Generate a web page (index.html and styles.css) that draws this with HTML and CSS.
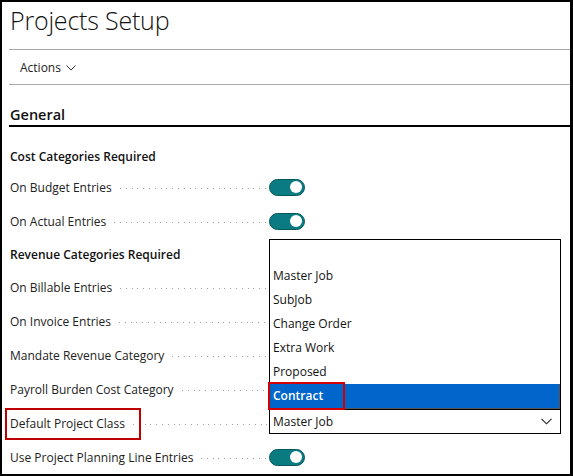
FILE: index.html
```html
<!DOCTYPE html>
<html lang="en">
<head>
<meta charset="utf-8">
<title>Projects Setup</title>
<link rel="stylesheet" href="styles.css">
</head>
<body>
<div class="frame">
  <div class="page">
    <h1 class="title">Projects Setup</h1>
    <div class="actions">
      <span class="actions-label">Actions</span>
      <svg class="chev-small" width="10" height="6" viewBox="0 0 10 6"><path d="M0.5 0.5 L5 5 L9.5 0.5" fill="none" stroke="#333" stroke-width="1"/></svg>
    </div>
    <div class="section-head">General</div>
    <div class="fields">
      <div class="group first">Cost Categories Required</div>
      <div class="row">
        <div class="label"><span class="text">On Budget Entries</span><span class="dots"></span></div>
        <div class="value"><span class="toggle"><span class="knob"></span></span></div>
      </div>
      <div class="row">
        <div class="label"><span class="text">On Actual Entries</span><span class="dots"></span></div>
        <div class="value"><span class="toggle"><span class="knob"></span></span></div>
      </div>
      <div class="group">Revenue Categories Required</div>
      <div class="row">
        <div class="label"><span class="text">On Billable Entries</span><span class="dots"></span></div>
        <div class="value"></div>
      </div>
      <div class="row">
        <div class="label"><span class="text">On Invoice Entries</span><span class="dots"></span></div>
        <div class="value"></div>
      </div>
      <div class="row">
        <div class="label"><span class="text">Mandate Revenue Category</span><span class="dots"></span></div>
        <div class="value"></div>
      </div>
      <div class="row">
        <div class="label"><span class="text">Payroll Burden Cost Category</span><span class="dots"></span></div>
        <div class="value"></div>
      </div>
      <div class="row">
        <div class="label"><span class="text marked">Default Project Class<span class="callout-label"></span></span><span class="dots"></span></div>
        <div class="value">
          <div class="combo">
            <ul class="popup">
              <li class="opt"></li>
              <li class="opt">Master Job</li>
              <li class="opt">SubJob</li>
              <li class="opt">Change Order</li>
              <li class="opt">Extra Work</li>
              <li class="opt">Proposed</li>
              <li class="opt selected">Contract<span class="callout-opt"></span></li>
            </ul>
            <div class="select">
              <span>Master Job</span>
              <svg class="chev" width="11" height="7" viewBox="0 0 11 7"><path d="M0.5 0.8 L5.5 5.8 L10.5 0.8" fill="none" stroke="#222" stroke-width="1.1"/></svg>
            </div>
          </div>
        </div>
      </div>
      <div class="row">
        <div class="label"><span class="text">Use Project Planning Line Entries</span><span class="dots"></span></div>
        <div class="value"><span class="toggle"><span class="knob"></span></span></div>
      </div>
    </div>
  </div>
</div>
</body>
</html>
```
FILE: styles.css
```css
* { box-sizing: border-box; }
html, body { margin: 0; padding: 0; background: #fff; }
body {
  width: 573px;
  height: 476px;
  font-family: "Segoe UI", "Open Sans", "Noto Sans", sans-serif;
  color: #1a1a1a;
  font-size: 12px;
}
.frame {
  width: 573px;
  height: 476px;
  border: 2px solid #000;
  border-right-width: 3px;
  position: relative;
  overflow: hidden;
}
.page { padding-left: 7px; }
.title {
  margin: 0;
  height: 48px;
  padding-left: 1px;
  padding-top: 3px;
  font-size: 25px;
  line-height: 30px;
  font-weight: 300;
  color: #111;
  border-bottom: 1px solid #a8a8a8;
  letter-spacing: -0.2px;
}
.actions {
  height: 35px;
  border-bottom: 1px solid #a8a8a8;
  display: flex;
  align-items: center;
  padding-left: 11px;
  gap: 5px;
  font-size: 12px;
  color: #222;
}
.chev-small { margin-top: 1px; }
.section-head {
  height: 42px;
  padding-top: 20px;
  padding-left: 1px;
  font-size: 14.5px;
  line-height: 20px;
  font-weight: 600;
  color: #111;
  border-bottom: 2px solid #000;
}
.fields { padding-top: 11px; padding-left: 1px; }
.group {
  height: 32px;
  padding-top: 7px;
  line-height: 20px;
  font-weight: 600;
  font-size: 12px;
  color: #111;
}
.group.first { padding-top: 9px; }
.row {
  height: 34px;
  display: grid;
  grid-template-columns: 259px 1fr;
  align-items: center;
}
.label {
  display: flex;
  align-items: center;
  gap: 8px;
  padding-right: 1px;
}
.text { white-space: nowrap; color: #222; position: relative; }
.dots {
  flex: 1;
  height: 1px;
  margin-top: 2px;
  background: repeating-linear-gradient(to right, #a0a0a0 0 1px, transparent 1px 5.8px);
}
.value { position: relative; height: 100%; display: flex; align-items: center; }
.toggle {
  width: 36px;
  height: 17px;
  border-radius: 9px;
  background: #0a7b81;
  border: 1px solid #05585d;
  position: relative;
  display: block;
}
.knob {
  position: absolute;
  right: 2px;
  top: 1.5px;
  width: 12px;
  height: 12px;
  border-radius: 50%;
  background: #fff;
}
.callout-label {
  position: absolute;
  left: -5px;
  top: -7px;
  width: 136px;
  height: 32px;
  border: 2px solid #c00000;
}
.combo {
  position: relative;
  width: 292px;
  margin-bottom: 3px;
}
.select {
  height: 25px;
  border: 1px solid #000;
  display: flex;
  align-items: center;
  justify-content: space-between;
  padding: 0 8px 0 3px;
  font-size: 12px;
  color: #111;
}
.popup {
  list-style: none;
  margin: 0;
  padding: 0;
  position: absolute;
  left: 0;
  bottom: 100%;
  width: 292px;
  border: 1px solid #000;
  border-bottom: none;
  background: #fff;
}
.opt {
  height: 24px;
  line-height: 24px;
  padding-left: 3px;
  font-size: 12px;
  color: #111;
  position: relative;
}
.opt.selected {
  background: #0066cc;
  color: #fff;
  font-weight: 600;
  border-bottom: 1px solid #555;
  border-right: 1px solid #555;
  height: 25px;
}
.callout-opt {
  position: absolute;
  left: -2px;
  top: -2px;
  width: 77px;
  height: 28px;
  border: 2px solid #d40000;
}
```
